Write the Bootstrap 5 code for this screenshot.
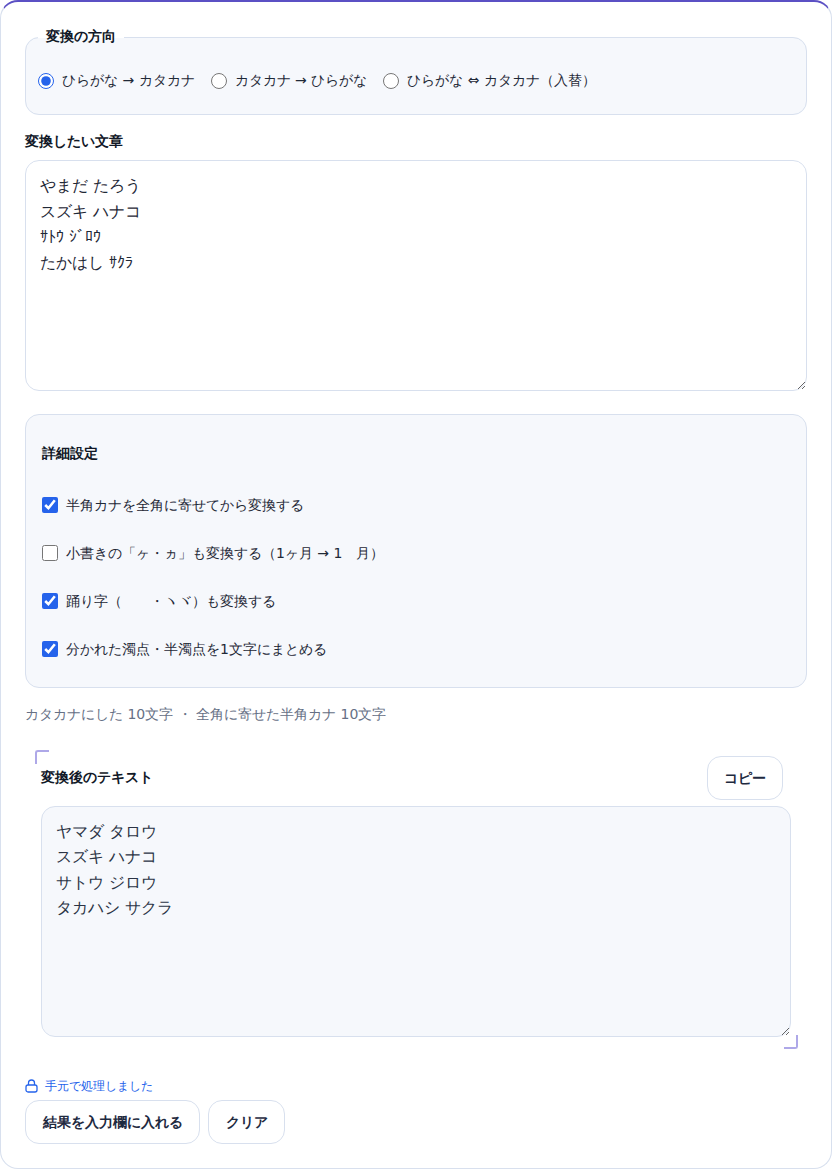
<!DOCTYPE html>
<html>
<head>
<meta charset="utf-8">
<title>変換</title>
<link href="https://cdn.jsdelivr.net/npm/bootstrap@5.3.0/dist/css/bootstrap.min.css" rel="stylesheet">
<style>
html,body{background:#fff;}
body{font-family:"DejaVu Sans",sans-serif;color:#1f2937;font-size:14px;line-height:1.5;}
.tool-shell{height:1169px;border:1px solid #d8e0ee;border-top:2px solid #5b50c4;border-radius:18px;padding:24px 24px 0;background:#fff;overflow:hidden;}
.dir-box{position:relative;height:78px;margin:11px 0 0;border:1px solid #d8e0ee;border-radius:14px;background:#f6f8fc;padding:0 12px;}
.dir-legend{position:absolute;top:-13px;left:12px;width:auto;float:none;margin:0;padding:0 8px;font-size:14px;font-weight:700;line-height:22px;color:#111827;background:linear-gradient(#fff 58%,#f6f8fc 58%);}
.dir-row{height:100%;padding-top:9px;gap:16px;}
.dir-row label{color:#1f2937;}
.tool-shell input[type=radio],.tool-shell input[type=checkbox]{width:16px;height:16px;margin:0;flex:none;accent-color:#2563eb;}
.field-title{font-size:14px;font-weight:700;color:#111827;line-height:21px;margin:16px 0 8px;}
.text-area{display:block;width:100%;height:231px;border:1px solid #d8e0ee;border-radius:14px;padding:12px 14px;font-family:inherit;font-size:16px;line-height:25.6px;color:#1f2937;background:#fff;outline:0;}
.adv-box{margin-top:23px;height:274px;border:1px solid #d8e0ee;border-radius:14px;background:#f6f8fc;padding:16px;}
.adv-title{font-weight:700;color:#111827;line-height:21px;margin:12px 0 17px;}
.adv-item{height:48px;gap:8px;}
.stat-line{color:#667085;line-height:21px;margin:16px 0 0;}
.out-wrap{position:relative;margin-top:25px;padding:15px 16px 12px;}
.out-wrap::before,.out-wrap::after{content:"";position:absolute;width:14px;height:14px;border:2px solid #aea8e8;}
.out-wrap::before{left:10px;top:0;border-right:0;border-bottom:0;border-top-left-radius:3px;}
.out-wrap::after{right:9px;bottom:0;border-left:0;border-top:0;border-bottom-right-radius:3px;}
.out-head{height:44px;margin:-9px 8px 6px 0;}
.out-title{font-size:14px;font-weight:700;color:#111827;margin-bottom:1px;}
.soft-btn{height:44px;border:1px solid #d8e0ee;border-radius:14px;background:#fff;color:#1e2a3f;font-weight:700;font-size:14px;padding:0 16px;}
.btn-row .soft-btn{padding:0 16.5px;}
.out-area{height:231px;padding-top:11.6px;background:#f6f8fc;color:#2b3445;}
.safe-note{margin-top:28px;height:18px;color:#2563eb;font-size:12px;font-weight:500;line-height:18px;gap:7px;}
.btn-row{gap:8px;margin-top:5px;}
</style>
</head>
<body>
<main class="tool-shell">
  <fieldset class="dir-box">
    <legend class="dir-legend">変換の方向</legend>
    <div class="d-flex align-items-center dir-row">
      <label class="d-flex align-items-center gap-2"><input type="radio" name="dir" checked>ひらがな → カタカナ</label>
      <label class="d-flex align-items-center gap-2"><input type="radio" name="dir">カタカナ → ひらがな</label>
      <label class="d-flex align-items-center gap-2"><input type="radio" name="dir">ひらがな ⇔ カタカナ（入替）</label>
    </div>
  </fieldset>
  <div class="field-title">変換したい文章</div>
  <textarea class="text-area">やまだ たろう
スズキ ハナコ
ｻﾄｳ ｼﾞﾛｳ
たかはし ｻｸﾗ</textarea>
  <section class="adv-box">
    <div class="adv-title">詳細設定</div>
    <label class="d-flex align-items-center adv-item"><input type="checkbox" checked>半角カナを全角に寄せてから変換する</label>
    <label class="d-flex align-items-center adv-item"><input type="checkbox">小書きの「ヶ・ヵ」も変換する（1ヶ月 → 1　月）</label>
    <label class="d-flex align-items-center adv-item"><input type="checkbox" checked>踊り字（　　・ヽヾ）も変換する</label>
    <label class="d-flex align-items-center adv-item"><input type="checkbox" checked>分かれた濁点・半濁点を1文字にまとめる</label>
  </section>
  <p class="stat-line">カタカナにした 10文字 ・ 全角に寄せた半角カナ 10文字</p>
  <section class="out-wrap">
    <div class="d-flex justify-content-between align-items-center out-head">
      <span class="out-title">変換後のテキスト</span>
      <button type="button" class="btn soft-btn">コピー</button>
    </div>
    <textarea class="text-area out-area" readonly>ヤマダ タロウ
スズキ ハナコ
サトウ ジロウ
タカハシ サクラ</textarea>
  </section>
  <div class="d-flex align-items-center safe-note">
    <svg width="13" height="14" viewBox="0 0 13 14" fill="none" stroke="currentColor" stroke-width="1.3" aria-hidden="true"><rect x="1" y="6" width="11" height="7" rx="2"/><path d="M3.5 6V4a3 3 0 0 1 6 0v2"/></svg>
    <span>手元で処理しました</span>
  </div>
  <div class="d-flex btn-row">
    <button type="button" class="btn soft-btn">結果を入力欄に入れる</button>
    <button type="button" class="btn soft-btn">クリア</button>
  </div>
</main>
<script src="https://cdn.jsdelivr.net/npm/bootstrap@5.3.0/dist/js/bootstrap.bundle.min.js"></script>
</body>
</html>
